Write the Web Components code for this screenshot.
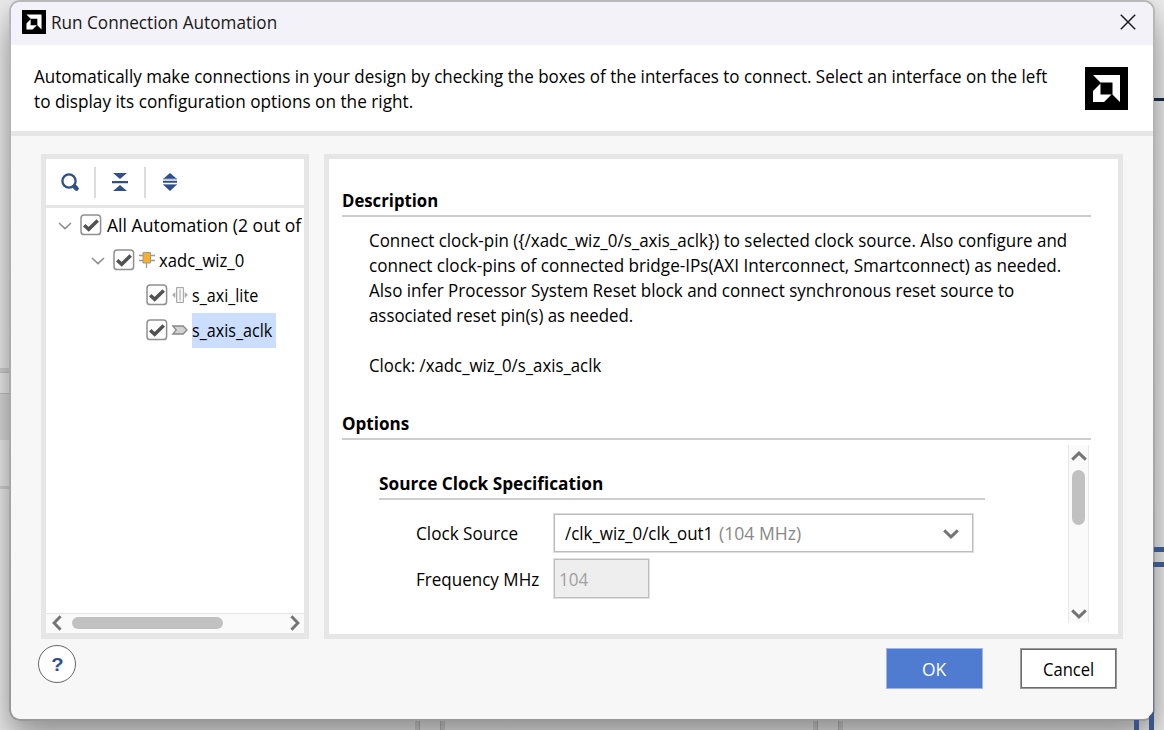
<!DOCTYPE html>
<html lang="en">
<head>
<meta charset="utf-8">
<title>Run Connection Automation</title>
<style>
html,body{margin:0;height:730px;overflow:hidden}
body{font:17.8px/25px "Open Sans","Noto Sans",sans-serif;color:#000;background:#ececec}
</style>
</head>
<body>
<automation-app></automation-app>
<script>
function define(name, html, init) {
  customElements.define(name, class extends HTMLElement {
    constructor() {
      super();
      this.attachShadow({mode: "open"}).innerHTML = html;
    }
    connectedCallback() { if (init) init(this, this.shadowRoot); }
  });
}

/* Background canvas edges seen around the dialog */
define("canvas-backdrop", `
<style>:host{position:absolute;inset:0;display:block}svg{display:block}</style>
<svg width="1164" height="730" shape-rendering="crispEdges">
  <path fill="#d2d2d2" d="M0 368h12v4H0zM0 486h12v3H0z"/>
  <path fill="#c4c4c4" d="M0 372h12v1H0zM0 393h12v1H0z"/>
  <path fill="#dadada" d="M0 394h12v46H0z"/>
  <path fill="#d2d2d2" d="M415 0h4v730h-4zM441 0h4v730h-4zM813 0h4v730h-4zM839 0h4v730h-4z"/>
  <path fill="#bdbdbd" d="M419 0h1v730h-1zM440 0h1v730h-1zM817 0h1v730h-1zM838 0h1v730h-1z"/>
</svg>`);
define("canvas-wires", `
<style>:host{position:absolute;inset:0;display:block}svg{display:block}</style>
<svg width="1164" height="730" shape-rendering="crispEdges">
  <path fill="#12263d" d="M1150 98h14v3h-14z"/>
  <path fill="#39538b" d="M1150 547h14v5h-14zM1149 562h15v5h-15zM1134 700h5v30h-5zM1149 712h5v18h-5z"/>
  <path fill="#6a7a98" d="M1153 567h1v145h-1z"/>
</svg>`);

define("brand-logo", `
<style>:host{display:block;width:43px;height:43px;flex:none}svg{display:block;width:100%;height:100%}</style>
<svg viewBox="0 0 43 43"><path fill="#000" d="M0 0h43v43H0z"/>
<path fill="#fff" d="M8 8h27v27l-7.5-7.5V15.5H15.5zM8 24l7.5-7.5v11h11L19 35H8z"/></svg>`);

define("tool-icon", `
<style>:host{display:block;flex:none}svg{display:block;overflow:visible}</style><div></div>`, (el, root) => {
  const S = {
    search: [18,18,'<circle cx="8" cy="8" r="6.6" fill="none" stroke="#2f4f8b" stroke-width="2.3"/><path d="M13.6 13.6l2 2" stroke="#2f4f8b" stroke-width="4.4" stroke-linecap="round"/>'],
    collapse: [16,18,'<path fill="#2f4f8b" d="M1 0h14L8 6zM0 8h16v2.2H0zM8 12l7 6H1z"/>'],
    expand: [14,18,'<path fill="#2f4f8b" d="M0 6l7-6 7 6zM0 7.7h14v2H0zM0 11.5h14L7 18z"/><path fill="#8093ba" d="M0 5.5h14v1H0zM0 11h14v1H0z"/>'],
    close: [16,16,'<path d="M.8.8l14.4 14.4M15.2.8L.8 15.2" stroke="#1c1c1c" stroke-width="1.5"/>'],
    down: [14,8,'<path d="M1 1l6 5.6L13 1" fill="none" stroke="#8c8c8c" stroke-width="1.5"/>'],
    bigdown: [16,10,'<path d="M1.2 1.4L8 7.9l6.8-6.5" fill="none" stroke="#747474" stroke-width="2.9"/>'],
    bigup: [16,10,'<path d="M1.2 8.6L8 2.1l6.8 6.5" fill="none" stroke="#747474" stroke-width="2.9"/>'],
    left: [10,16,'<path d="M8.6 1.2L2.1 8l6.5 6.8" fill="none" stroke="#747474" stroke-width="2.9"/>'],
    right: [10,16,'<path d="M1.4 1.2L7.9 8l-6.5 6.8" fill="none" stroke="#747474" stroke-width="2.9"/>'],
    chip: [16,16,'<path d="M0 3.500h16M0 8.500h16M7.500 11v5" stroke="#999" stroke-width="1.300"/><path fill="#fbae29" stroke="#999" stroke-width="1" d="M4 .5h7.500v10.500H4z"/>'],
    bus: [16,16,'<path fill="#aaa" d="M3.300 5v6L0 8zM12.700 5v6L16 8z"/><path fill="#e2e2e2" stroke="#aaa" d="M4.500.5h7v15h-7z"/><path stroke="#fff" stroke-width="1.200" d="M6.600 1.500v13M9.800 1.500v13"/><path stroke="#b4b4b4" d="M8 3v10"/>'],
    port: [16,10,'<path fill="#d2d2d2" stroke="#888" stroke-width="1.300" d="M.8 1h10.400L15 5l-3.800 4H.8l3.400-4z"/>'],
    check: [22,22,'<rect x="1" y="1" width="19.600" height="19.600" rx="3.200" fill="#fff" stroke="#909090" stroke-width="1.500"/><path d="M4.200 11.200l4.500 4.100 9-8.800" fill="none" stroke="#525252" stroke-width="3.500"/>']
  };
  const [w,h,m] = S[el.getAttribute("name")];
  root.querySelector("div").innerHTML = `<svg width="${w}" height="${h}" viewBox="0 0 ${w} ${h}">${m}</svg>`;
});

define("title-bar", `
<style>
:host{display:flex;align-items:center;height:43px;background:#f3f2f8;padding:0 17px 0 11px;box-sizing:border-box;color:#191919}
brand-logo{width:24px;height:24px;margin-right:5px;margin-top:-3px}
ui-text{flex:1;margin-top:-2px}
tool-icon{margin-top:-3px}
</style><brand-logo></brand-logo><ui-text w="227"><slot></slot></ui-text><tool-icon name="close"></tool-icon>`);

define("intro-banner", `
<style>
:host{display:flex;box-sizing:border-box;height:91px;background:#fff;border-bottom:5px solid #e6e6e6;padding:19px 25px 0 23px;justify-content:space-between}
brand-logo{margin-top:3px}
</style><div><slot></slot></div><brand-logo></brand-logo>`);

define("tree-toolbar", `
<style>
:host{display:flex;align-items:center;height:46px;border-bottom:3px solid #e6e6e6;padding-left:15px}
i{width:2px;height:31px;background:#dcdcdc}
.a{margin:0 16px 0 15px}.b{margin:0 17px 0 16px}
</style><tool-icon name="search"></tool-icon><i class="a"></i><tool-icon name="collapse"></tool-icon><i class="b"></i><tool-icon name="expand"></tool-icon>`);

define("tree-row", `
<style>
:host{display:flex;height:35px;align-items:center;padding-left:calc(12px + var(--depth,0)*33px)}
.arrow{width:22px;flex:none}.check{width:22px;margin-top:-1px;margin-right:var(--gap,5px)}
.icon{width:20px;margin-top:-1px;flex:none}.icon:empty{display:none}
.label{height:35px;box-sizing:border-box;padding:5px 3px 5px 0;flex:none}
:host([selected]) .label{background:#ccdeff}
</style><span class="arrow"></span><tool-icon class="check" name="check"></tool-icon><span class="icon"></span><span class="label"><slot></slot></span>`, (el, root) => {
  el.style.setProperty("--depth", el.getAttribute("depth") || 0);
  if (el.hasAttribute("open")) root.querySelector(".arrow").innerHTML = '<tool-icon name="down"></tool-icon>';
  const icon = el.getAttribute("icon");
  if (icon) {
    root.querySelector(".icon").innerHTML = `<tool-icon name="${icon}"></tool-icon>`;
    el.style.setProperty("--gap", "4px");
  }
});

define("scroll-bar", `
<style>
:host{display:flex;box-sizing:border-box;background:#fafafa;align-items:center}
:host(:not([vertical])){height:20px;border-top:1px solid #e4e4e4;padding:0 4px 1px 6px;justify-content:flex-start}
:host([vertical]){width:21px;height:178px;flex-direction:column;border:solid #e8e8e8;border-width:0 1px;padding:6px 0 4px}
b{background:#c1c1c1;border-radius:7px}
:host(:not([vertical])) b{width:151px;height:12px;margin-left:10px}
:host([vertical]) b{width:13px;height:55px;margin-top:9px}
.end{margin:0 0 0 auto}:host([vertical]) .end{margin:auto 0 0}
</style><span class="start"></span><b></b><span class="end"></span>`, (el, root) => {
  const v = el.hasAttribute("vertical");
  root.querySelector(".start").innerHTML = `<tool-icon name="${v ? "bigup" : "left"}"></tool-icon>`;
  root.querySelector(".end").innerHTML = `<tool-icon name="${v ? "bigdown" : "right"}"></tool-icon>`;
});

define("tree-panel", `
<style>
:host{display:flex;flex-direction:column;box-sizing:border-box;width:268px;height:485px;border:5px solid #e6e6e6;border-bottom-width:6px;background:#fff}
.tree{flex:1;overflow:hidden}
</style><tree-toolbar></tree-toolbar><div class="tree"><slot></slot></div><scroll-bar></scroll-bar>`);

define("section-title", `
<style>:host{display:block;font-weight:700;height:27px;border-bottom:2px solid #cdcdcd}</style><slot></slot>`);

define("combo-box", `
<style>:host{display:flex;box-sizing:border-box;width:421px;height:40px;border:1px solid #dedede;background:#fff;box-shadow:inset 0 0 0 1px #bcbcbc;align-items:center;padding:0 14px 0 11px}
tool-icon{margin-left:auto;margin-top:1px}</style><slot></slot><tool-icon name="bigdown"></tool-icon>`);

define("text-field", `
<style>:host{display:flex;box-sizing:border-box;width:97px;height:41px;border:1px solid #e2e2e2;background:#eee;box-shadow:inset 0 0 0 1px #bebebe;align-items:center;padding:1px 5px 0;color:#a0a0a0}</style><slot></slot>`);

define("form-row", `
<style>:host{display:grid;grid-template-columns:137px auto;align-items:center;justify-content:start}</style><slot name="label"></slot><slot></slot>`);

define("options-panel", `
<style>
:host{display:block;box-sizing:border-box;width:799px;height:485px;border:5px solid #e6e6e6;background:#fff;padding:29px 27px 0 13px}
.text{padding:11px 0 33px 27px}.gap{height:25px}
.opts{display:flex;justify-content:space-between;padding-right:2px}
.form{width:606px;padding:31px 0 0 37px}
.form form-row{margin-left:37px}
.first{margin-top:13px;margin-bottom:5px}
.freq{padding-top:2px}
scroll-bar{margin-top:5px}
.dim{color:#888;margin-left:5px}
</style>
<section-title><ui-text w="97">Description</ui-text></section-title>
<div class="text">
<ui-text w="699">Connect clock-pin ({/xadc_wiz_0/s_axis_aclk}) to selected clock source. Also configure and</ui-text>
<ui-text w="693">connect clock-pins of connected bridge-IPs(AXI Interconnect, Smartconnect) as needed.</ui-text>
<ui-text w="646">Also infer Processor System Reset block and connect synchronous reset source to</ui-text>
<ui-text w="265">associated reset pin(s) as needed.</ui-text>
<div class="gap"></div>
<ui-text w="233">Clock: /xadc_wiz_0/s_axis_aclk</ui-text>
</div>
<section-title><ui-text w="68">Options</ui-text></section-title>
<div class="opts"><div class="form">
<section-title><ui-text w="225">Source Clock Specification</ui-text></section-title>
<form-row class="first"><ui-text slot="label" w="103">Clock Source</ui-text><combo-box><ui-text w="149">/clk_wiz_0/clk_out1</ui-text><ui-text class="dim" w="83">(104 MHz)</ui-text></combo-box></form-row>
<form-row><ui-text class="freq" slot="label" w="124">Frequency MHz</ui-text><text-field><ui-text w="30">104</ui-text></text-field></form-row>
</div><scroll-bar vertical></scroll-bar></div>`);

define("push-button", `
<style>:host{display:flex;box-sizing:border-box;width:97px;height:41px;align-items:center;justify-content:center;background:#fff;border:1px solid #9a9a9a;box-shadow:inset 0 0 0 1px #6c6c6c;padding-top:2px}
:host([primary]){background:#4f7bd1;border-color:#9db6e6;box-shadow:none;color:#fff}</style><slot></slot>`);

define("help-button", `
<style>:host{display:flex;box-sizing:border-box;width:38px;height:38px;border:1px solid #666;border-radius:50%;background:#fff;align-items:center;justify-content:center;color:#2f4f8b;font:700 18px/20px "Liberation Sans",sans-serif}
span{transform:scaleX(1.12);margin-top:2px}</style><span>?</span>`);

define("dialog-footer", `
<style>:host{display:flex;align-items:flex-start;padding:6px 36px 0 27px}
.ok{margin:3px 37px 0 auto}.cancel{margin-top:3px}</style>
<help-button></help-button><push-button class="ok" primary><ui-text w="25">OK</ui-text></push-button><push-button class="cancel"><ui-text w="52">Cancel</ui-text></push-button>`);

define("dialog-window", `
<style>
:host{display:block;box-sizing:border-box;position:relative;width:1146px;height:721px;margin-left:9px;padding:2px;border-radius:11px;background:linear-gradient(#b8b8b8,#a8a8a8 60%,#999);box-shadow:0 20px 36px rgba(0,0,0,.34),0 4px 18px rgba(0,0,0,.09)}
.inner{height:717px;border-radius:9px;overflow:hidden;background:#f7f7f7}
.panels{display:flex;gap:15px;padding:18px 0 0 30px}
</style><div class="inner">
<title-bar>Run Connection Automation</title-bar>
<intro-banner><ui-text w="1014">Automatically make connections in your design by checking the boxes of the interfaces to connect. Select an interface on the left</ui-text><ui-text w="380">to display its configuration options on the right.</ui-text></intro-banner>
<div class="panels"><tree-panel>
<tree-row open><ui-text w="195">All Automation (2 out of</ui-text></tree-row>
<tree-row open depth="1" icon="chip"><ui-text w="86">xadc_wiz_0</ui-text></tree-row>
<tree-row depth="2" icon="bus"><ui-text w="67">s_axi_lite</ui-text></tree-row>
<tree-row depth="2" icon="port" selected><ui-text w="81">s_axis_aclk</ui-text></tree-row>
</tree-panel><options-panel></options-panel></div>
<dialog-footer></dialog-footer></div>`);

define("automation-app", `
<style>:host{display:block;position:relative;width:1164px;height:730px;overflow:hidden}
.wires{clip-path:polygon(1154px 0,1164px 0,1164px 730px,1130px 730px,1130px 720px,1146px 720px,1153px 712px,1153px 560px,1154px 560px)}</style>
<canvas-backdrop></canvas-backdrop><dialog-window></dialog-window><canvas-wires class="wires"></canvas-wires>`);

/* One line of text condensed to the advance width given in "w" */
define("ui-text", `
<style>:host{display:block;white-space:nowrap;height:25px}span{display:inline-block;transform-origin:0 50%}</style><span><slot></slot></span>`, (el, root) => {
  const w = +el.getAttribute("w"), s = root.querySelector("span");
  if (!el.getRootNode().querySelector("tool-icon[name=close]")) el.style.width = w + "px";
  const natural = s.getBoundingClientRect().width;
  if (natural) s.style.transform = `scaleX(${(w - 0.8) / natural})`;
});
</script>
</body>
</html>
